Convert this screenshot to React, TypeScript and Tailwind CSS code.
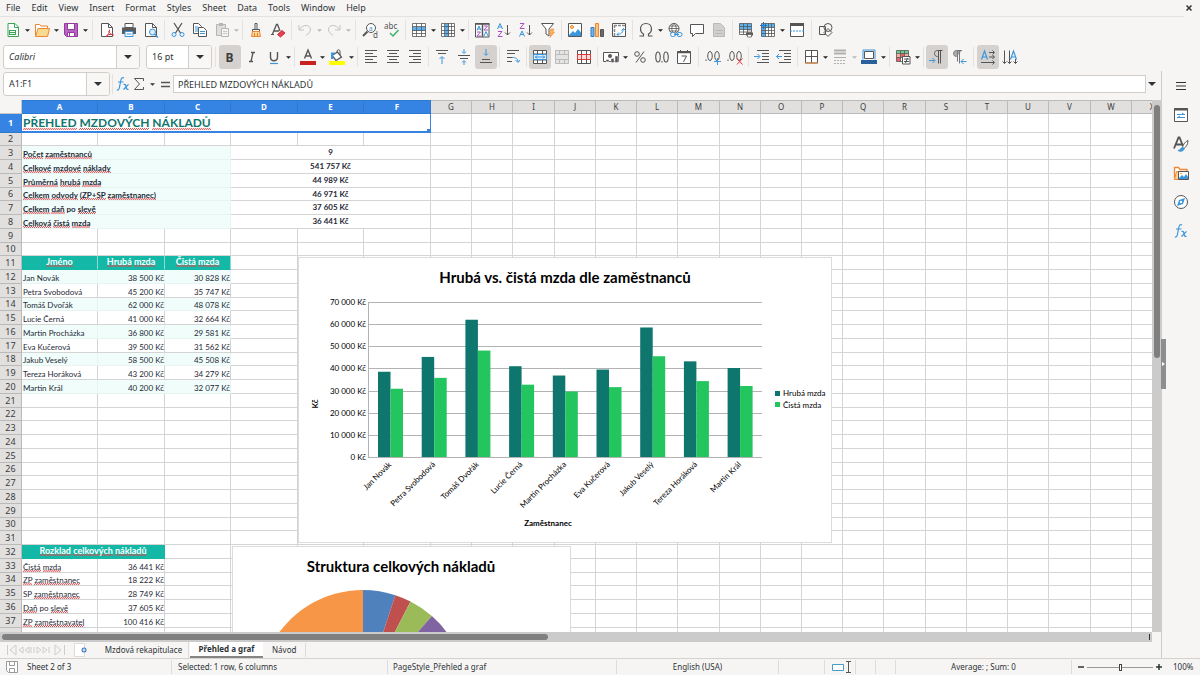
import { Fragment } from "react";
import type { ReactNode } from "react";

const INK = "#555";
const BLUE = "#3a96dd";
const ORANGE = "#ed8733";

const icons: Record<string, ReactNode> = {
  new: (
    <>
      <path d="M3 1.500h7l3.500 3.500v9.500h-10.500z" fill="#fff" stroke="#3aa655" />
      <path d="M9.500 1.500v4h4" fill="none" stroke="#3aa655" />
      <path d="M4 8h7v5h-7z" fill="#3aa655" />
      <path d="M5 9.500h5M5 11.500h5" stroke="#fff" />
    </>
  ),
  open: (
    <>
      <path d="M1.500 14V2.500h4l1.500 1.500h6.500v3" fill="#fff" stroke={ORANGE} />
      <path d="M1.500 14.500L4 6.500h11.500l-2 8z" fill="#f8db8f" stroke={ORANGE} />
    </>
  ),
  save: (
    <>
      <path d="M1.500 1.500h13v13h-11l-2-2z" fill="#b564c0" stroke="#94399f" />
      <path d="M4.500 1.500h7v6h-7zM4.500 10.500h7v4h-7z" fill="#fff" stroke="#94399f" />
      <path d="M6.500 11v3" stroke="#94399f" />
    </>
  ),
  pdf: (
    <>
      <path d="M2.500 1.500h7l4 4v9h-11z" fill="#fff" stroke={INK} />
      <path d="M9.500 1.500v4h4" fill="none" stroke={INK} />
      <path d="M7 15c2-2 4-5 3.500-7.500M9.500 9c1 2 3 4 5 4.500M7.500 13.500c2-1 5-1.500 7-1" fill="none" stroke="#dc3545" />
    </>
  ),
  print: (
    <>
      <path d="M4 1.500h8v4h-8z" fill="#fff" stroke={INK} />
      <path d="M1 5.500h14v6.500h-14z" fill="#5b5b5b" />
      <path d="M4 9.500h8v5h-8z" fill="#fff" stroke={BLUE} />
      <path d="M5.500 12h5" stroke={BLUE} />
    </>
  ),
  preview: (
    <>
      <path d="M2.500 1.500h7l4 4v9h-11z" fill="#fff" stroke={INK} />
      <path d="M9.500 1.500v4h4" fill="none" stroke={INK} />
      <circle cx="9.500" cy="10" r="3" fill="#d9edfb" stroke={BLUE} />
      <path d="M11.500 12l3.500 3.500" stroke={BLUE} strokeWidth="1.500" />
    </>
  ),
  cut: (
    <>
      <path d="M4 1l6.500 10M12 1L5.500 11" stroke={INK} strokeWidth="1.300" />
      <circle cx="4" cy="12.500" r="2" fill="none" stroke={BLUE} />
      <circle cx="12" cy="12.500" r="2" fill="none" stroke={BLUE} />
    </>
  ),
  copy: (
    <>
      <path d="M1.500 1.500h5l3 3v7h-8z" fill="#fff" stroke={INK} />
      <path d="M3 5h3M3 7h3M3 9h3" stroke={BLUE} />
      <path d="M6.500 5.500h5l3 3v6h-8z" fill="#fff" stroke={INK} />
      <path d="M8 9.500h5M8 11.500h5" stroke={BLUE} />
    </>
  ),
  paste: (
    <>
      <path d="M2.500 2.500h9v11h-9z" fill="#dedede" stroke="#b5b5b5" />
      <path d="M5 1h4v3h-4z" fill="#b5b5b5" />
      <path d="M7.500 6.500h7v8h-7z" fill="#f4f4f4" stroke="#b5b5b5" />
      <path d="M9 9.500h4M9 11.500h4" stroke="#c8c8c8" />
    </>
  ),
  brush: (
    <>
      <path d="M7 1.500h2v6h-2zM4.500 7.500h7v2h-7z" fill="#fff" stroke={INK} />
      <path d="M4.500 9.500h7l1 5h-9z" fill="#fbd493" stroke={ORANGE} />
      <path d="M6.500 11v3M9.500 11v3" stroke={ORANGE} />
    </>
  ),
  clear: (
    <>
      <path d="M2.500 12L6.500 2.500h1L10 9M4 9h5" fill="none" stroke={INK} strokeWidth="1.300" />
      <path d="M7.500 12.500l4.500-4 3 2.500-4.500 4z" fill="#e8414f" stroke="#c92f3e" />
      <path d="M1 12.500h3" stroke={INK} />
    </>
  ),
  undo: <path d="M2 3v5h5M2.500 7.500C6 2 13 2.500 13.500 7c.3 3-2 4.500-4.500 6.500" fill="none" stroke="#c3c3c3" />,
  redo: <path d="M14 3v5h-5M13.500 7.500C10 2 3 2.500 2.500 7c-.3 3 2 4.500 4.500 6.500" fill="none" stroke="#c3c3c3" />,
  find: (
    <>
      <circle cx="9" cy="6" r="4.500" fill="#fff" stroke={INK} />
      <path d="M5.500 9.500L1 14" stroke={INK} strokeWidth="2" />
      <text x="6.800" y="8.500" fontSize="7" fill={BLUE} fontFamily="Noto Sans">a</text>
      <text x="11" y="15.500" fontSize="8" fill={INK} fontFamily="Noto Sans">d</text>
    </>
  ),
  spell: (
    <>
      <text x="0" y="7" fontSize="8" fill={INK} fontFamily="Noto Sans">abc</text>
      <path d="M6 11l3 3 5.500-6" fill="none" stroke="#3bb56b" strokeWidth="1.500" />
    </>
  ),
  row: (
    <>
      <path d="M1.500 1.500h13v13h-13z" fill="#fff" />
      <path d="M1.500 5h13v4h-13z" fill="#59b1ef" />
      <path d="M1.500 1.500h13v13h-13zM1.500 4.500h13M1.500 8.500h13M1.500 11.500h13M5.500 1.500v13M10.500 1.500v13" fill="none" stroke={INK} strokeWidth=".8" />
    </>
  ),
  column: (
    <>
      <path d="M1.500 1.500h13v13h-13z" fill="#fff" />
      <path d="M5 1.500h4v13h-4z" fill="#59b1ef" />
      <path d="M1.500 1.500h13v13h-13zM1.500 4.500h13M1.500 8.500h13M1.500 11.500h13M4.500 1.500v13M8.500 1.500v13M11.500 1.500v13" fill="none" stroke={INK} strokeWidth=".8" />
    </>
  ),
  sort: (
    <>
      <path d="M1.500 1.500h13.500v13.500h-13.500z" fill="#fff" stroke={INK} />
      <path d="M1 2h14.500M8.500 2v13" stroke={INK} strokeWidth="1.500" />
      <path d="M3 8.500L5 4l2 4.500M3.500 7h3M10 14l2-4.500 2 4.500" fill="none" stroke={BLUE} />
      <path d="M3 10h3.500L3 14h4M10 4h3.500L10 8h4" fill="none" stroke="#a94fc0" />
    </>
  ),
  asc: (
    <>
      <path d="M1.500 7L4 1.500 6.500 7M2.500 5h3" fill="none" stroke={BLUE} />
      <path d="M2 9.500h4L2 14.500h4.500" fill="none" stroke="#a94fc0" />
      <path d="M11.500 3v10M9 10.500l2.500 2.500 2.500-2.500" fill="none" stroke={INK} />
    </>
  ),
  desc: (
    <>
      <path d="M2 1.500h4L2 6.500h4.500" fill="none" stroke="#a94fc0" />
      <path d="M1.500 14.500L4 9l2.500 5.500M2.500 12.500h3" fill="none" stroke={BLUE} />
      <path d="M11.500 3v10M9 10.500l2.500 2.500 2.500-2.500" fill="none" stroke={INK} />
    </>
  ),
  filter: (
    <>
      <path d="M1.500 1.500h12l-4.500 5.500v7l-3-2V7z" fill="#fff" stroke={INK} />
      <path d="M11 7h3l-1.500 3h2L10 15.500l1-4h-2z" fill="#f8b45c" stroke={ORANGE} strokeWidth=".6" />
    </>
  ),
  image: (
    <>
      <path d="M1.500 1.500h13v13h-13z" fill="#fff" stroke={INK} />
      <path d="M2 13l4-4 2 2 3-4 3 3.500v3.500H2z" fill="#3a96dd" />
      <circle cx="5" cy="5" r="1.500" fill="#fbd493" stroke={ORANGE} />
    </>
  ),
  chart: (
    <>
      <path d="M2 5.500h3v9h-3z" fill="#6bb8f0" stroke="#2f7fc0" />
      <path d="M6.500 1.500h3v13h-3z" fill="#fbc47b" stroke={ORANGE} />
      <path d="M11.500 7.500h3v7h-3z" fill="#6a6a6a" stroke={INK} />
    </>
  ),
  pivot: (
    <>
      <path d="M1.500 1.500h13v13h-13z" fill="#fff" stroke={INK} />
      <path d="M3 3.500h11M3.500 3v11" stroke="#888" strokeWidth="1.500" strokeDasharray="3 1" />
      <path d="M6 12.500c4 0 6-2 6.500-6M10.500 8.500l2-2 2 2M8 10.500l-2 2 2 2" fill="none" stroke={BLUE} />
    </>
  ),
  omega: <path d="M1.500 14h4v-2C3.500 11 2.500 9 2.500 7c0-3.500 2.500-5.500 5.500-5.500s5.500 2 5.500 5.500c0 2-1 4-3 5v2h4" fill="none" stroke={INK} strokeWidth="1.200" />,
  link: (
    <>
      <circle cx="7" cy="6.500" r="5" fill="#fff" stroke={INK} />
      <path d="M2 6.500h10M3 4h8M3 9h8M7 1.500c-3 3-3 7 0 10M7 1.500c3 3 3 7 0 10" fill="none" stroke={INK} strokeWidth=".8" />
      <rect x="3.500" y="10.500" width="5" height="4" rx="2" fill="#f6f5f4" stroke={BLUE} />
      <rect x="10" y="10.500" width="5" height="4" rx="2" fill="#f6f5f4" stroke={BLUE} />
      <path d="M7 12.500h5" stroke={BLUE} />
    </>
  ),
  comment: <path d="M1.500 2.500h13v9h-8l-3 3v-3h-2z" fill="#fff" stroke={INK} />,
  page: (
    <>
      <path d="M2.500 1.500h7l4 4v9h-11z" fill="#d0d0d0" stroke="#b8b8b8" />
      <path d="M4.500 8.500h7M4.500 11.500h7" stroke="#b8b8b8" />
    </>
  ),
  printArea: (
    <>
      <path d="M1.500 1.500h12v11h-12z" fill="#fff" />
      <path d="M1.500 1.500h12v6h-12z" fill="#59b1ef" />
      <path d="M1.500 1.500h12v11h-12zM1.500 4.500h12M1.500 7.500h12M1.500 10h12M5.500 1.500v11M9.500 1.500v11" fill="none" stroke={INK} strokeWidth=".8" />
      <path d="M8 10.500h7v3h-7z" fill="#5b5b5b" />
      <path d="M9.500 9h4v1.500h-4zM9.500 12.500h4v2.500h-4z" fill="#fff" stroke={INK} strokeWidth=".7" />
    </>
  ),
  freeze: (
    <>
      <path d="M1.500 1.500h13v13h-13z" fill="#fff" />
      <path d="M1.500 1.500h13v4h-9v9h-4z" fill="#59b1ef" />
      <path d="M1.500 1.500h13v13h-13zM1.500 5.500h13M1.500 8.500h13M1.500 11.500h13M5.500 1.500v13M8.500 1.500v13M11.500 1.500v13" fill="none" stroke={INK} strokeWidth=".8" />
      <path d="M3.500 0v7M0 3.500h7" stroke="#2176c7" />
    </>
  ),
  split: (
    <>
      <path d="M1.500 1.500h13v13h-13z" fill="#fff" stroke={INK} />
      <path d="M1 1h14v3h-14z" fill={INK} />
      <path d="M1 9h14" stroke={BLUE} strokeDasharray="2 1" />
    </>
  ),
  shapes: (
    <>
      <circle cx="10" cy="5.500" r="4" fill="none" stroke={INK} />
      <path d="M1.500 4.500h6v8h-6zM10 6.500l4 4-4 4-4-4z" fill="none" stroke={INK} />
    </>
  ),
  bold: <text x="3.500" y="12.500" fontSize="12" fontWeight="700" fill="#3c3c3c" fontFamily="Noto Sans">B</text>,
  italic: <path d="M7 3.500h4M5 12.500h4M9 3.500l-2 9" stroke={INK} strokeWidth="1.300" />,
  underline: (
    <>
      <path d="M4.500 3v5c0 5 7 5 7 0V3" fill="none" stroke={INK} strokeWidth="1.400" />
      <path d="M4 14.500h8" stroke={BLUE} strokeWidth="1.200" />
    </>
  ),
  fontColor: (
    <>
      <path d="M4.500 9.500L8 1l3.500 8.500M5.500 7h5" fill="none" stroke={INK} strokeWidth="1.400" />
      <path d="M0 12h16v4h-16z" fill="#c9211e" />
    </>
  ),
  fill: (
    <>
      <path d="M3 6.500l5.500-3.500 4 5-5.500 3.500z" fill="#fff" stroke={INK} strokeWidth="1.300" />
      <path d="M8 3c-.5-3 3.500-3 3 0v3" fill="none" stroke={INK} />
      <path d="M3 10V4.500h3" fill="none" stroke={BLUE} strokeWidth="2" />
      <path d="M0 12h16v4h-16z" fill="#ffff00" />
    </>
  ),
  left: <path d="M2 1.500h12M2 4.500h8M2 7.500h12M2 10.500h8M2 13.500h12" stroke={INK} />,
  center: <path d="M2 1.500h12M4 4.500h8M2 7.500h12M4 10.500h8M2 13.500h12" stroke={INK} />,
  right: <path d="M2 1.500h12M6 4.500h8M2 7.500h12M6 10.500h8M2 13.500h12" stroke={INK} />,
  top: (
    <>
      <path d="M2 1.500h12M4 4.500h8" stroke={INK} />
      <path d="M8 15V8M5.500 10L8 7.500l2.500 2.500" fill="none" stroke={BLUE} />
    </>
  ),
  middle: (
    <>
      <path d="M2 6.500h12M4 9.500h8" stroke={INK} />
      <path d="M8 0v4M6 2.500l2 2 2-2M8 16v-4M6 13.500l2-2 2 2" fill="none" stroke={BLUE} />
    </>
  ),
  bottom: (
    <>
      <path d="M2 13.500h12M4 10.500h8" stroke={INK} />
      <path d="M8 0v6M6 4.500l2 2 2-2" fill="none" stroke={BLUE} />
    </>
  ),
  wrap: (
    <>
      <path d="M2 1.500h12M2 4.500h8M2 8.500h5M2 12.500h5" stroke={INK} />
      <path d="M7 8.500c4 0 6 1 6 4.500M10.500 11l2.500 2.500L15 11" fill="none" stroke={BLUE} />
    </>
  ),
  merge: (
    <>
      <path d="M1.500 1.500h13v13h-13zM1.500 5h13M1.500 11h13M5.500 1.500v13M10.500 1.500v13" fill="#fff" stroke={INK} />
      <path d="M1.500 5.500h13v5h-13z" fill="#d9edfb" stroke={BLUE} />
      <path d="M3 8h10M5 6.500L3.500 8 5 9.500M11 6.500L12.500 8 11 9.500" fill="none" stroke={BLUE} />
    </>
  ),
  mergeOff: (
    <path d="M1.500 1.500h13v13h-13zM1.500 5.500h13M1.500 10.500h13M5.500 1.500v4M10.500 1.500v4M5.500 10.500v4M10.500 10.500v4" fill="#e4e4e4" stroke="#bbb" />
  ),
  unmerge: (
    <>
      <path d="M1.500 1.500h13v13h-13zM5.500 1.500v13M10.500 1.500v13" fill="#fff" stroke={INK} />
      <path d="M1.500 5.500h13v5h-13zM5.500 5.500v5M10.500 5.500v5" fill="#fbdcdc" stroke="#d93a3a" />
    </>
  ),
  currency: (
    <>
      <path d="M.5 3.500h15v9h-15z" fill="#fff" stroke={INK} />
      <circle cx="7" cy="7" r="2" fill={INK} />
      <path d="M3 10.500h3v2h-3zM8 9.500h3v4h-3zM12 7h3v6.500h-3z" fill={INK} stroke="#f6f5f4" strokeWidth=".5" />
    </>
  ),
  percent: (
    <>
      <circle cx="5" cy="5" r="2.300" fill="none" stroke={INK} />
      <circle cx="11" cy="11" r="2.300" fill="none" stroke={INK} />
      <path d="M12 2.500l-8 11" stroke={INK} />
    </>
  ),
  number: <path d="M4 3c-3 0-3 10 0 10s3-10 0-10zM12 3c-3 0-3 10 0 10s3-10 0-10zM8 12v1.500" fill="none" stroke={INK} strokeWidth="1.100" />,
  date: (
    <>
      <path d="M1.500 2.500h13v12h-13z" fill="#fff" stroke={INK} />
      <path d="M1 3.500h14" stroke={INK} strokeWidth="1.500" />
      <path d="M4.500 1v3M11.500 1v3M5.500 7h5l-3 6" fill="none" stroke={INK} />
    </>
  ),
  addDecimal: (
    <>
      <path d="M5 2.500c-3 0-3 9 0 9s3-9 0-9zM12 2.500c-3 0-3 9 0 9s3-9 0-9zM1 10.500v1.500" fill="none" stroke={INK} />
      <path d="M12.500 9v7M9 12.500h7" stroke={BLUE} />
    </>
  ),
  delDecimal: (
    <>
      <path d="M5 2.500c-3 0-3 9 0 9s3-9 0-9zM12 2.500c-3 0-3 9 0 9s3-9 0-9zM1 10.500v1.500" fill="none" stroke={INK} />
      <path d="M10 9.500l5.500 6M15.500 9.500l-5.500 6" stroke="#e23b3b" />
    </>
  ),
  indent: (
    <>
      <path d="M3 1.500h12M8 4.500h7M8 7.500h7M8 10.500h7M3 13.500h12" stroke={INK} />
      <path d="M0 7.500h5.500M3.500 5l2.500 2.500L3.500 10" fill="none" stroke={BLUE} />
    </>
  ),
  outdent: (
    <>
      <path d="M3 1.500h12M8 4.500h7M8 7.500h7M8 10.500h7M3 13.500h12" stroke={INK} />
      <path d="M6 7.500H.5M3 5L.5 7.500 3 10" fill="none" stroke={BLUE} />
    </>
  ),
  border: (
    <>
      <path d="M2.500 1.500h12v12.500h-12zM8.500 1.500v12.500M2.500 7.500h12" fill="#fff" stroke={INK} />
      <path d="M2 14h13" stroke={ORANGE} />
    </>
  ),
  borderStyle: (
    <>
      <path d="M2 1.500h12M2 4.500h12" stroke="#b0b0b0" strokeWidth="2" />
      <path d="M2 8.500h12" stroke="#b0b0b0" />
      <path d="M2 11.500h12M2 14.500h12" stroke="#b0b0b0" strokeDasharray="2 1" />
    </>
  ),
  borderColor: (
    <>
      <path d="M3.500 2.500h9v7h-9z" fill="#fff" stroke={INK} />
      <path d="M2 1h12M2 1v9.500M14 1v9.500" stroke={BLUE} />
      <path d="M0 11h16v4h-16z" fill="#2a6099" />
    </>
  ),
  conditional: (
    <>
      <path d="M1.500 1.500h12v11h-12z" fill="#fff" />
      <path d="M1.500 1.500h12v3h-12z" fill="#6bcf90" />
      <path d="M1.500 4.500h4v4h-4zM9.500 4.500h4v4h-4z" fill="#f5b19a" />
      <path d="M5.500 4.500h4v4h-4zM1.500 8.500h4v4h-4z" fill="#e8616c" />
      <path d="M1.500 1.500h12v11h-12zM1.500 4.500h12M1.500 8.500h12M5.500 1.500v11M9.500 1.500v11" fill="none" stroke={INK} strokeWidth=".8" />
      <path d="M7.500 7.500h7.500v7.500h-7.500z" fill="#fff" stroke={INK} />
      <path d="M9 10h5M9 12.500h5M12.500 9l-2 5" stroke={INK} />
    </>
  ),
  ltr: (
    <>
      <path d="M13.500 1.500H8.500c-4 0-4 6 0 6M9.500 1.500v13M11.500 1.500v13" fill="none" stroke={INK} />
      <path d="M0 11.500h5.500M3.500 9l2.500 2.500L3.500 14" fill="none" stroke={BLUE} />
    </>
  ),
  rtl: (
    <>
      <path d="M11 1.500H5.500c-4 0-4 6 0 6" fill="#aaa" stroke="#777" />
      <path d="M6.500 1.500v11M8.500 1.500v13" stroke="#777" />
      <path d="M15.500 12.500H10M12.500 10L10 12.500l2.500 2.500" fill="none" stroke={BLUE} />
    </>
  ),
  textH: (
    <>
      <path d="M1.500 10.500L4.500 2l3 8.500M2.500 8h4" fill="none" stroke={BLUE} strokeWidth="1.200" />
      <path d="M9 3.500h5M9 8h5M1 13.500h13M12.500 1.500l2 2-2 2M12.500 6l2 2-2 2M12.500 11.500l2 2-2 2" fill="none" stroke={INK} />
    </>
  ),
  textV: (
    <>
      <path d="M8.500 10.500L11.500 2l3 8.500M9.500 8h4" fill="none" stroke={BLUE} strokeWidth="1.200" />
      <path d="M2.500 1.500v13M7.500 1.500v13M13.500 10v4.500M.5 12.500l2 2 2-2M5.500 12.500l2 2 2-2M11.500 12.500l2 2 2-2" fill="none" stroke={INK} />
    </>
  ),
  fx: (
    <>
      <path d="M9 2c-2-1-2.800.5-3.200 2.500l-1.400 7c-.4 2-1.200 3-2.600 2.300M3 6h5.500" fill="none" stroke={BLUE} strokeWidth="1.200" />
      <path d="M8.500 8.500c1.500-.6 2 0 2.500 2.200s1 3.300 2.500 2.500M13.500 8.300L8.500 13.500" fill="none" stroke={BLUE} strokeWidth="1.200" />
    </>
  ),
  sum: <path d="M12.500 5V2.500h-9l5 5.500-5 5.500h9V11" fill="none" stroke={INK} />,
  equals: <path d="M4 6.500h9M4 10.500h9" stroke={INK} strokeWidth="1.500" />,
  menu: <path d="M3 4.500h10M3 8h10M3 11.500h10" stroke="#2e3436" strokeWidth="1.200" />,
  properties: (
    <>
      <path d="M1.500 1.500h13v13h-13z" fill="#fff" stroke={INK} />
      <path d="M1 2.500h14" stroke={INK} strokeWidth="2" />
      <path d="M4 7.500h8M4 10.500h8M9 6l2 1.500M7 9l-2 1.500" stroke={BLUE} />
    </>
  ),
  styles: (
    <>
      <path d="M1 12.500L5.500 1.500h1L10 10M3 8.500h6" fill="none" stroke={INK} strokeWidth="1.800" />
      <path d="M15 4.500c-4 2-5 5-5.500 7l1.500 1c2-1.500 4-4 4-8z" fill="#fff" stroke={INK} />
      <path d="M9.500 11.500c-2 0-1.500 3-4.500 3 3 1.500 6 .5 6-2z" fill={BLUE} stroke={BLUE} />
    </>
  ),
  gallery: (
    <>
      <path d="M1.500 13.500V2.500h4l1.500 2h7v4" fill="#fff" stroke={ORANGE} strokeWidth="1.300" />
      <path d="M1.500 14.500l2-8h2v8z" fill="#fbd493" stroke={ORANGE} />
      <path d="M5.500 6.500h10v8h-10z" fill="#fff" stroke={INK} />
      <path d="M6 13l3-3 2 2 2-3 2 3v2H6z" fill={BLUE} />
      <circle cx="8" cy="8.500" r=".8" fill={ORANGE} />
    </>
  ),
  navigator: (
    <>
      <circle cx="8" cy="8" r="6.500" fill="#fff" stroke={INK} />
      <path d="M12 4l-2 6-6 2 2-6z" fill={BLUE} />
      <circle cx="8" cy="8" r="1.200" fill="#fff" />
    </>
  ),
};

type Tool = { icon?: string; label?: string; caret?: boolean; active?: boolean; dim?: boolean; sep?: "narrow" | "wide" };

const standardTools: Tool[] = [
  { icon: "new", label: "New", caret: true },
  { icon: "open", label: "Open", caret: true },
  { icon: "save", label: "Save", caret: true },
  { sep: "wide" },
  { icon: "pdf", label: "Export as PDF" },
  { icon: "print", label: "Print" },
  { icon: "preview", label: "Print Preview" },
  { sep: "narrow" },
  { icon: "cut", label: "Cut" },
  { icon: "copy", label: "Copy" },
  { icon: "paste", label: "Paste", caret: true, dim: true },
  { sep: "narrow" },
  { icon: "brush", label: "Clone Formatting" },
  { icon: "clear", label: "Clear Formatting" },
  { sep: "narrow" },
  { icon: "undo", label: "Undo", caret: true, dim: true },
  { icon: "redo", label: "Redo", caret: true, dim: true },
  { sep: "wide" },
  { icon: "find", label: "Find and Replace" },
  { icon: "spell", label: "Spelling" },
  { sep: "narrow" },
  { icon: "row", label: "Row", caret: true },
  { icon: "column", label: "Column", caret: true },
  { sep: "narrow" },
  { icon: "sort", label: "Sort" },
  { icon: "asc", label: "Sort Ascending" },
  { icon: "desc", label: "Sort Descending" },
  { icon: "filter", label: "AutoFilter" },
  { sep: "narrow" },
  { icon: "image", label: "Insert Image" },
  { icon: "chart", label: "Insert Chart" },
  { icon: "pivot", label: "Insert Pivot Table" },
  { sep: "narrow" },
  { icon: "omega", label: "Special Character", caret: true },
  { icon: "link", label: "Hyperlink" },
  { icon: "comment", label: "Comment" },
  { icon: "page", label: "Headers and Footers", dim: true },
  { sep: "narrow" },
  { icon: "printArea", label: "Define Print Area" },
  { icon: "freeze", label: "Freeze Rows and Columns", caret: true },
  { icon: "split", label: "Split Window" },
  { sep: "wide" },
  { icon: "shapes", label: "Show Draw Functions" },
];

const formatTools: Tool[] = [
  { sep: "wide" },
  { icon: "bold", label: "Bold", active: true },
  { icon: "italic", label: "Italic" },
  { icon: "underline", label: "Underline", caret: true },
  { sep: "narrow" },
  { icon: "fontColor", label: "Font Color", caret: true },
  { icon: "fill", label: "Background Color", caret: true },
  { sep: "narrow" },
  { icon: "left", label: "Align Left" },
  { icon: "center", label: "Center Horizontally" },
  { icon: "right", label: "Align Right" },
  { sep: "narrow" },
  { icon: "top", label: "Align Top" },
  { icon: "middle", label: "Center Vertically" },
  { icon: "bottom", label: "Align Bottom", active: true },
  { sep: "narrow" },
  { icon: "wrap", label: "Wrap Text" },
  { sep: "narrow" },
  { icon: "merge", label: "Merge and Center", active: true },
  { icon: "mergeOff", label: "Merge Cells", dim: true },
  { icon: "unmerge", label: "Unmerge Cells" },
  { sep: "narrow" },
  { icon: "currency", label: "Currency", caret: true },
  { icon: "percent", label: "Percent" },
  { icon: "number", label: "Number" },
  { icon: "date", label: "Date" },
  { sep: "wide" },
  { icon: "addDecimal", label: "Add Decimal Place" },
  { icon: "delDecimal", label: "Delete Decimal Place" },
  { sep: "narrow" },
  { icon: "indent", label: "Increase Indent" },
  { icon: "outdent", label: "Decrease Indent" },
  { sep: "narrow" },
  { icon: "border", label: "Borders", caret: true },
  { icon: "borderStyle", label: "Border Style", caret: true, dim: true },
  { icon: "borderColor", label: "Border Color", caret: true },
  { sep: "narrow" },
  { icon: "conditional", label: "Conditional", caret: true },
  { sep: "narrow" },
  { icon: "ltr", label: "Left-To-Right", active: true },
  { icon: "rtl", label: "Right-To-Left" },
  { sep: "wide" },
  { icon: "textH", label: "Text direction left to right", active: true },
  { icon: "textV", label: "Text direction top to bottom" },
];

const menus = ["File", "Edit", "View", "Insert", "Format", "Styles", "Sheet", "Data", "Tools", "Window", "Help"];

function Icon({ name }: { name: string }) {
  return (
    <svg viewBox="0 0 16 16" className="size-4 shrink-0 overflow-visible" aria-hidden="true">
      {icons[name]}
    </svg>
  );
}

function Caret({ className = "" }: { className?: string }) {
  return (
    <svg viewBox="0 0 8 4" className={className} aria-hidden="true">
      <path d="M0 0h8L4 4z" fill="currentColor" />
    </svg>
  );
}

function ToolItem({ tool }: { tool: Tool }) {
  if (tool.sep) {
    return (
      <span className={`flex h-5 shrink-0 justify-center ${tool.sep === "wide" ? "w-[7px]" : "w-[5px]"}`}>
        <span className="w-px bg-[#e4e2e0]" />
      </span>
    );
  }
  return (
    <>
      <button
        type="button"
        aria-label={tool.label}
        className={`flex h-6 w-[22px] shrink-0 items-center justify-center rounded-[3px] ${tool.active ? "bg-[#d5d1ce]" : ""}`}
      >
        <Icon name={tool.icon!} />
      </button>
      {tool.caret && (
        <button
          type="button"
          aria-label={`${tool.label} options`}
          className={`flex h-6 w-[7px] shrink-0 items-center justify-center ${tool.dim ? "text-[#b8b8b8]" : "text-[#222]"}`}
        >
          <Caret className="h-[3px] w-[5px]" />
        </button>
      )}
    </>
  );
}

function ComboBox({ label, value, className, inputClass = "" }: { label: string; value: string; className: string; inputClass?: string }) {
  return (
    <div className={`flex h-6 shrink-0 overflow-hidden rounded-[3px] border border-[#d2cdc9] bg-white ${className}`}>
      <input aria-label={label} defaultValue={value} className={`min-w-0 flex-1 pl-[5px] outline-none ${inputClass}`} />
      <button
        type="button"
        aria-label={`${label} list`}
        className="flex w-[23px] items-center justify-center border-l border-[#d2cdc9] bg-[#f8f7f6]"
      >
        <Caret className="h-1 w-2" />
      </button>
    </div>
  );
}

/* Sheet data */

const columns = [
  { name: "A", width: "w-[76px]" },
  { name: "B", width: "w-[67px]" },
  { name: "C", width: "w-[66px]" },
  { name: "D", width: "w-[67px]" },
  { name: "E", width: "w-[66px]" },
  { name: "F", width: "w-[67px]" },
  { name: "G", width: "w-[41px]" },
  { name: "H", width: "w-[41px]" },
  { name: "I", width: "w-[42px]" },
  { name: "J", width: "w-[41px]" },
  { name: "K", width: "w-[41px]" },
  { name: "L", width: "w-[41px]" },
  { name: "M", width: "w-[42px]" },
  { name: "N", width: "w-[41px]" },
  { name: "O", width: "w-[41px]" },
  { name: "P", width: "w-[41px]" },
  { name: "Q", width: "w-[41px]" },
  { name: "R", width: "w-[42px]" },
  { name: "S", width: "w-[41px]" },
  { name: "T", width: "w-[41px]" },
  { name: "U", width: "w-[41px]" },
  { name: "V", width: "w-[42px]" },
  { name: "W", width: "w-[41px]" },
  { name: "X", width: "w-[41px]" },
];

const employees = [
  { name: "Jan Novák", gross: 38500, net: 30828 },
  { name: "Petra Svobodová", gross: 45200, net: 35747 },
  { name: "Tomáš Dvořák", gross: 62000, net: 48078 },
  { name: "Lucie Černá", gross: 41000, net: 32664 },
  { name: "Martin Procházka", gross: 36800, net: 29581 },
  { name: "Eva Kučerová", gross: 39500, net: 31562 },
  { name: "Jakub Veselý", gross: 58500, net: 45508 },
  { name: "Tereza Horáková", gross: 43200, net: 34279 },
  { name: "Martin Král", gross: 40200, net: 32077 },
];

const summary = [
  ["Počet zaměstnanců", "9"],
  ["Celkové mzdové náklady", "541 757 Kč"],
  ["Průměrná hrubá mzda", "44 989 Kč"],
  ["Celkem odvody (ZP+SP zaměstnanec)", "46 971 Kč"],
  ["Celkem daň po slevě", "37 605 Kč"],
  ["Celková čistá mzda", "36 441 Kč"],
];

const breakdown = [
  ["Čistá mzda", "36 441 Kč"],
  ["ZP zaměstnanec", "18 222 Kč"],
  ["SP zaměstnanec", "28 749 Kč"],
  ["Daň po slevě", "37 605 Kč"],
  ["ZP zaměstnavatel", "100 416 Kč"],
];

function money(n: number) {
  return `${String(n).replace(/(\d)(?=(\d{3})+$)/g, "$1 ")} Kč`;
}

// words the spell checker leaves alone
const known = ["SP", "po"];

function Misspelled({ text }: { text: string }) {
  return (
    <>
      {text.split(" ").map((word, i) => (
        <Fragment key={i}>
          {i > 0 && " "}
          <span
            className={
              known.includes(word)
                ? ""
                : "bg-[conic-gradient(#e0474c_25%,transparent_0_50%,#e0474c_0_75%,transparent_0)] bg-[length:2px_2px] bg-bottom bg-repeat-x"
            }
          >
            {word}
          </span>
        </Fragment>
      ))}
    </>
  );
}

const cellBase = "border-r border-b p-0 whitespace-nowrap";
const plain = `${cellBase} border-[#d4d4d4]`;
const mint = `${cellBase} border-[#e6f5f2] bg-[#f0fdfa]`;
const teal = `${cellBase} border-[#14b8a6] bg-[#14b8a6] text-center align-top text-[9px] leading-3 font-bold text-white`;

function Cells({ count }: { count: number }) {
  return (
    <>
      {Array.from({ length: count }, (_, i) => (
        <td key={i} className={plain} />
      ))}
    </>
  );
}

function RowCells({ n }: { n: number }) {
  if (n === 1) {
    return (
      <>
        <td colSpan={6} className="relative border-r border-b-2 border-[#3584e4] pl-px align-bottom text-[12px] leading-4 font-bold whitespace-nowrap text-[#0f766e]">
          <Misspelled text="PŘEHLED MZDOVÝCH NÁKLADŮ" />
          <span className="absolute -right-px -bottom-0.5 size-1 bg-[#3584e4]" />
        </td>
        <Cells count={18} />
      </>
    );
  }
  if (n >= 3 && n <= 8) {
    const [label, value] = summary[n - 3];
    return (
      <>
        <td colSpan={3} className={`${mint} pl-px align-bottom leading-[10px] font-bold`}>
          <Misspelled text={label} />
        </td>
        <td colSpan={3} className={`${plain} text-center align-top leading-3 font-bold`}>{value}</td>
        <Cells count={18} />
      </>
    );
  }
  if (n === 11) {
    return (
      <>
        {["Jméno", "Hrubá mzda", "Čistá mzda"].map((h) => (
          <th key={h} scope="col" className={`${teal} border-r-[#8ddcd3] last:border-r-[#14b8a6]`}>
            <Misspelled text={h} />
          </th>
        ))}
        <Cells count={21} />
      </>
    );
  }
  if (n >= 12 && n <= 20) {
    const person = employees[n - 12];
    const look = n % 2 === 0 ? mint : plain;
    return (
      <>
        <td className={`${look} pl-px align-bottom leading-[10px]`}>{person.name}</td>
        <td className={`${look} text-right align-bottom leading-[10px]`}>{money(person.gross)}</td>
        <td className={`${look} text-right align-bottom leading-[10px]`}>{money(person.net)}</td>
        <Cells count={21} />
      </>
    );
  }
  if (n === 32) {
    return (
      <>
        <th colSpan={2} scope="colgroup" className={teal}>
          <Misspelled text="Rozklad celkových nákladů" />
        </th>
        <Cells count={22} />
      </>
    );
  }
  if (n >= 33 && n <= 37) {
    const [label, value] = breakdown[n - 33];
    return (
      <>
        <td className={`${plain} pl-px align-bottom leading-[10px]`}>
          <Misspelled text={label} />
        </td>
        <td className={`${plain} text-right align-bottom leading-[10px]`}>{value}</td>
        <Cells count={22} />
      </>
    );
  }
  return <Cells count={24} />;
}

function BarChart() {
  const baseY = 200;
  const y = (v: number) => baseY - (v / 10000) * 22.14;
  return (
    <svg
      viewBox="0 0 534 286"
      className="absolute top-[157px] left-[298px] h-[286px] w-[534px] bg-white font-['Lato','Noto_Sans',sans-serif]"
      role="img"
      aria-label="Hrubá vs. čistá mzda dle zaměstnanců"
    >
      <rect x=".5" y=".5" width="533" height="285" fill="#fff" stroke="#dcdcdc" />
      <text x="267" y="26" textAnchor="middle" fontSize="15" fontWeight="700">Hrubá vs. čistá mzda dle zaměstnanců</text>
      {Array.from({ length: 8 }, (_, i) => (
        <g key={i}>
          <path d={`M70 ${Math.round(y(i * 10000)) + 0.5}H464`} stroke="#b3b3b3" />
          <text x="68" y={y(i * 10000) + 3} textAnchor="end" fontSize="8">{i === 0 ? "0 Kč" : money(i * 10000)}</text>
        </g>
      ))}
      <path d="M70.500 45v156" stroke="#b3b3b3" />
      {employees.map((e, i) => {
        const x = 80 + i * 43.7;
        return (
          <g key={e.name}>
            <rect x={x} y={y(e.gross)} width="12.500" height={baseY - y(e.gross)} fill="#0f766e" />
            <rect x={x + 12.5} y={y(e.net)} width="12.500" height={baseY - y(e.net)} fill="#22c55e" />
            <text transform={`translate(${x + 14} 208) rotate(-45)`} textAnchor="end" fontSize="8">{e.name}</text>
          </g>
        );
      })}
      <text transform="translate(20 147) rotate(-90)" textAnchor="middle" fontSize="8" fontWeight="700">Kč</text>
      <text x="250" y="269" textAnchor="middle" fontSize="8" fontWeight="700">Zaměstnanec</text>
      <rect x="477" y="134" width="5" height="5" fill="#0f766e" />
      <text x="485" y="139" fontSize="8">Hrubá mzda</text>
      <rect x="477" y="145" width="5" height="5" fill="#22c55e" />
      <text x="485" y="151" fontSize="8">Čistá mzda</text>
    </svg>
  );
}

const slices = [
  { from: 0, to: 18.1, color: "#4f81bd" },
  { from: 18.1, to: 27.2, color: "#c0504d" },
  { from: 27.2, to: 41.5, color: "#9bbb59" },
  { from: 41.5, to: 60.2, color: "#8064a2" },
  { from: 60.2, to: 110.1, color: "#4bacc6" },
  { from: 110.1, to: 235, color: "#f79646" },
  { from: 235, to: 360, color: "#f79646" },
];

function PieChart() {
  const point = (deg: number) => {
    const a = (deg * Math.PI) / 180;
    return `${131 + 104 * Math.sin(a)} ${148 - 104 * Math.cos(a)}`;
  };
  return (
    <svg
      viewBox="0 0 339 280"
      className="absolute top-[446px] left-[232px] h-[280px] w-[339px] bg-white font-['Lato','Noto_Sans',sans-serif]"
      role="img"
      aria-label="Struktura celkových nákladů"
    >
      <rect x=".5" y=".5" width="338" height="279" fill="#fff" stroke="#dcdcdc" />
      <text x="169" y="26" textAnchor="middle" fontSize="15" fontWeight="700">Struktura celkových nákladů</text>
      {slices.map((s) => (
        <path key={s.from} d={`M131 148L${point(s.from)}A104 104 0 0 1 ${point(s.to)}Z`} fill={s.color} />
      ))}
    </svg>
  );
}

function Sheet() {
  return (
    <div className="relative min-w-0 flex-1 overflow-hidden bg-white">
      <table className="w-[1173px] table-fixed border-separate border-spacing-0 font-['Lato','Noto_Sans',sans-serif] text-[8px] text-[#1f2937]">
        <colgroup>
          <col className="w-[22px]" />
          {columns.map((c) => (
            <col key={c.name} className={c.width} />
          ))}
        </colgroup>
        <thead className="font-['Noto_Sans',sans-serif] text-[8px] leading-3">
          <tr className="h-3.5">
            <td className="border-r border-b border-[#c9c7c5] bg-[#f6f5f4] p-0" />
            {columns.map((c, i) => (
              <th
                key={c.name}
                scope="col"
                className={`border-t border-r border-b p-0 ${
                  i < 6 ? "border-[#2f78d0] bg-[#3584e4] font-bold text-white" : "border-[#bcbab8] bg-[#e1e0df] font-normal text-[#3c3c3c]"
                }`}
              >
                {c.name}
              </th>
            ))}
          </tr>
        </thead>
        <tbody>
          {Array.from({ length: 38 }, (_, i) => i + 1).map((n) => (
            <tr key={n} className={n === 1 ? "h-[19px]" : n % 4 === 2 ? "h-[13px]" : "h-[14px]"}>
              <th
                scope="row"
                className={`border-r border-b p-0 text-center font-['Noto_Sans',sans-serif] text-[9px] leading-3 ${
                  n === 1 ? "border-[#2f78d0] bg-[#3584e4] font-bold text-white" : "border-[#bcbab8] bg-[#e1e0df] font-normal text-[#3c3c3c]"
                }`}
              >
                {n < 38 && n}
              </th>
              <RowCells n={n} />
            </tr>
          ))}
        </tbody>
      </table>
      <BarChart />
      <PieChart />
    </div>
  );
}

function StatusSep() {
  return <span className="h-3.5 w-px shrink-0 bg-[#dedcda]" />;
}

export default function App() {
  return (
    <div className="flex h-screen flex-col overflow-hidden bg-[#f6f5f4] font-['Noto_Sans',sans-serif] text-[9px] leading-3 text-[#2e3436]">
      <header className="shrink-0">
        <nav className="mr-4 flex h-[17px] items-center gap-[11px] border-b border-[#e4e2e0] pl-1.5">
          {menus.map((m) => (
            <button key={m} type="button">{m}</button>
          ))}
          <button type="button" aria-label="Close document" className="-mr-2 ml-auto">
            <svg viewBox="0 0 6 6" className="size-1.5">
              <path d="M.5.5l5 5M5.500.5l-5 5" stroke="#2e3436" strokeWidth="1.500" />
            </svg>
          </button>
        </nav>
        <div className="flex h-[26px] items-center pl-0.5">
          {standardTools.map((t, i) => (
            <ToolItem key={i} tool={t} />
          ))}
        </div>
        <div className="flex h-7 items-center pl-[3px]">
          <ComboBox label="Font Name" value="Calibri" className="mr-1.5 w-[137px]" inputClass="italic" />
          <ComboBox label="Font Size" value="16 pt" className="w-[66px]" />
          {formatTools.map((t, i) => (
            <ToolItem key={i} tool={t} />
          ))}
        </div>
      </header>

      <div className="flex min-h-0 flex-1">
        <main className="flex min-w-0 flex-1 flex-col">
          <div className="flex h-[29px] shrink-0 items-center pb-[3px] pl-[3px]">
            <ComboBox label="Name Box" value="A1:F1" className="w-[107px]" />
            <span className="mx-0.5 h-5 w-px bg-[#e4e2e0]" />
            <button type="button" aria-label="Function Wizard"><Icon name="fx" /></button>
            <button type="button" aria-label="Select Function" className="flex items-center">
              <Icon name="sum" />
              <Caret className="mr-0.5 ml-[3px] h-[3px] w-[5px]" />
            </button>
            <button type="button" aria-label="Formula"><Icon name="equals" /></button>
            <input
              aria-label="Input line"
              defaultValue="PŘEHLED MZDOVÝCH NÁKLADŮ"
              className="h-[18px] min-w-0 flex-1 border border-[#d2cdc9] bg-white pl-1 outline-none"
            />
            <button type="button" aria-label="Expand Formula Bar" className="px-0.5">
              <Caret className="h-1 w-2" />
            </button>
            <span className="w-[3px]" />
          </div>

          <div className="flex min-h-0 flex-1">
            <Sheet />
            <div className="flex w-[9px] shrink-0 flex-col items-center bg-[#cbcbcb] pt-[5px]">
              <div className="h-[253px] w-1.5 rounded-full bg-[#7f7f7f]" />
            </div>
          </div>
          <div className="mr-[9px] flex h-2.5 shrink-0 items-center justify-between bg-[#cbcbcb] px-0.5">
            <div className="h-1.5 w-[546px] rounded-full bg-[#7f7f7f]" />
            <div className="h-1.5 w-px bg-[#333]" />
          </div>

          <div className="flex h-4 shrink-0 items-center text-[8px] whitespace-nowrap">
            <svg viewBox="0 0 60 12" className="ml-1.5 h-3 w-[60px]" aria-hidden="true">
              <path
                d="M1.500 1v10M10 1L4 6l6 5zM17 3l-4 3 4 3zM23 3l-4 3 4 3zM25 3v6M28 3v6M31 3l4 3-4 3zM37 3l4 3-4 3zM43 3v6M49 1l6 5-6 5zM58.500 1v10"
                fill="none"
                stroke="#cfcdcb"
              />
            </svg>
            <button type="button" aria-label="Add Sheet" className="mr-[11px] ml-2">
              <svg viewBox="0 0 14 14" className="size-3.5">
                <path d="M.5.5h10v13H.5z" fill="#fff" stroke="#dedcda" />
                <circle cx="10" cy="7" r="2.500" fill="#3a77c2" />
                <path d="M10 5.500v3M8.500 7h3" stroke="#fff" />
              </svg>
            </button>
            <button type="button" className="h-4 w-[90px] border-r border-[#dedcda] text-center">Mzdová rekapitulace</button>
            <button type="button" className="ml-px h-4 w-[73px] border-b-2 border-[#858585] bg-white text-center font-bold">Přehled a graf</button>
            <button type="button" className="h-4 px-[9px]">Návod</button>
            <StatusSep />
          </div>
        </main>

        <aside className="relative flex w-[39px] shrink-0 flex-col items-center gap-[13px] border-l border-[#cfcbc8] pt-[7px]">
          {["menu", "properties", "styles", "gallery", "navigator", "fx"].map((name) => (
            <button key={name} type="button" aria-label={`Sidebar ${name}`}>
              <Icon name={name} />
            </button>
          ))}
          <button
            type="button"
            aria-label="Hide sidebar"
            className="absolute top-[268px] -left-px flex h-[50px] w-[5px] items-center justify-center bg-[#8e8e8e]"
          >
            <svg viewBox="0 0 3 4" className="h-1 w-[3px]">
              <path d="M0 0l3 2-3 2z" fill="#fff" />
            </svg>
          </button>
        </aside>
      </div>

      <footer className="flex h-[17px] shrink-0 items-center border-t border-[#d5d1ce] text-[8px]">
        <svg viewBox="0 0 12 12" className="mr-[9px] ml-1.5 size-3" aria-hidden="true">
          <path d="M.5.5h11v11h-9l-2-2zM3.500.5h5v4h-5zM3.500 7.500h5v4h-5z" fill="#fff" stroke="#9a9a9a" />
        </svg>
        <span className="w-36">Sheet 2 of 3</span>
        <StatusSep />
        <span className="w-[215px] pl-1.5">Selected: 1 row, 6 columns</span>
        <StatusSep />
        <span className="w-[228px] pl-[5px]">PageStyle_Přehled a graf</span>
        <StatusSep />
        <span className="w-[161px] text-center">English (USA)</span>
        <StatusSep />
        <span className="w-[45px]" />
        <StatusSep />
        <svg viewBox="0 0 30 12" className="h-3 w-[30px]" aria-hidden="true">
          <path d="M7.500 3.500h11v6h-11z" fill="#fff" stroke="#4a9cc9" />
          <path d="M21 .5h5M21 11.500h5M23.500 1v10" stroke={INK} />
        </svg>
        <StatusSep />
        <span className="w-[19px]" />
        <StatusSep />
        <span className="w-[19px]" />
        <StatusSep />
        <span className="flex-1 text-center">Average: ; Sum: 0</span>
        <StatusSep />
        <button type="button" aria-label="Zoom out" className="ml-[5px]">
          <svg viewBox="0 0 8 8" className="size-2"><path d="M1 4h6" stroke="#2e3436" strokeWidth="1.500" /></svg>
        </button>
        <input
          type="range"
          aria-label="Zoom"
          min="20"
          max="180"
          defaultValue="100"
          className="mx-0.5 h-2 w-[66px] appearance-none bg-transparent [&::-webkit-slider-runnable-track]:h-px [&::-webkit-slider-runnable-track]:bg-[#999] [&::-webkit-slider-thumb]:-mt-[3px] [&::-webkit-slider-thumb]:h-[7px] [&::-webkit-slider-thumb]:w-[3px] [&::-webkit-slider-thumb]:appearance-none [&::-webkit-slider-thumb]:border [&::-webkit-slider-thumb]:border-[#444] [&::-webkit-slider-thumb]:bg-white"
        />
        <button type="button" aria-label="Zoom in">
          <svg viewBox="0 0 8 8" className="size-2"><path d="M1 4h6M4 1v6" stroke="#2e3436" strokeWidth="1.500" /></svg>
        </button>
        <span className="w-[37px] pl-2.5">100%</span>
      </footer>
    </div>
  );
}
